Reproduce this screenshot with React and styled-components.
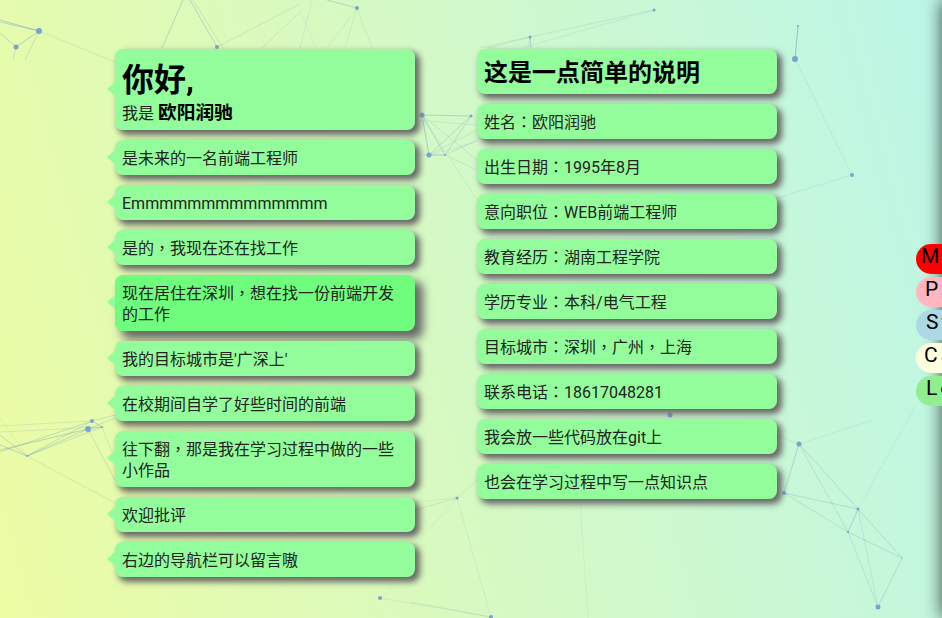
import React from 'react';
import styled, { createGlobalStyle } from 'styled-components';

const GlobalStyle = createGlobalStyle`
  html, body {
    margin: 0;
    padding: 0;
  }
  body {
    font-family: Roboto, "Noto Sans CJK SC", sans-serif;
    font-size: 16px;
    color: #222;
  }
`;

const Page = styled.div`
  position: relative;
  width: 942px;
  height: 618px;
  overflow: hidden;
  background: linear-gradient(75deg, #ecfca3 0%, #bcf6e8 100%);
`;

const Backdrop = styled.svg`
  position: absolute;
  top: 0;
  left: 0;
  filter: blur(0.5px);
`;

const Columns = styled.main`
  position: relative;
  display: flex;
  gap: 62px;
  padding: 49px 0 0 115px;
`;

const Column = styled.section`
  display: flex;
  flex-direction: column;
  gap: 10px;
  width: 300px;
`;

const Card = styled.div`
  position: relative;
  box-sizing: border-box;
  padding: 8px 7px 6px;
  border-radius: 8px;
  background: ${props => (props.$hover ? '#70fd7d' : '#93fd9b')};
  box-shadow: ${props => (props.$hover ? '7px 7px 10px 1px #666' : '4px 4px 6px 1px #666')};
  line-height: 21px;

  ${props => props.$arrow && `
    &::before {
      content: '';
      position: absolute;
      top: 50%;
      left: -8px;
      margin-top: -8px;
      border-style: solid;
      border-width: 7px 8px 7px 0;
      border-color: transparent #93fd9b transparent transparent;
    }
  `}
`;

const Hello = styled.h1`
  margin: 0;
  padding-top: 3px;
  font-size: 32px;
  line-height: 41px;
  font-weight: 700;
  color: #000;
`;

const Intro = styled.p`
  margin: 0;
  height: 23px;
  line-height: 26px;
`;

const Name = styled.strong`
  font-size: 18.72px;
  line-height: 1;
  color: #000;
`;

const Heading = styled.h2`
  margin: 0;
  padding-top: 2px;
  font-size: 24px;
  line-height: 29px;
  font-weight: 700;
  color: #000;
`;

const Punct = styled.span`
  font-family: "Noto Sans CJK TC", sans-serif;
  line-height: 1;
`;

const Drawer = styled.aside`
  position: absolute;
  top: 0;
  bottom: 0;
  left: 942px;
  width: 40px;
  box-shadow: 0 0 18px rgba(0, 0, 0, 0.7);
`;

const NavList = styled.nav`
  position: absolute;
  top: 244px;
  left: -26px;
  display: flex;
  flex-direction: column;
  gap: 3px;
  width: 66px;
`;

const NavPill = styled.a`
  height: 30px;
  padding-left: ${props => props.$inset}px;
  border-radius: 15px 0 0 15px;
  background: ${props => props.$color};
  color: #000;
  font-size: 21px;
  line-height: 25px;
  letter-spacing: 3px;
  white-space: nowrap;
  overflow: hidden;
`;

const leftItems = [
  { text: '是未来的一名前端工程师' },
  { text: 'Emmmmmmmmmmmmmm' },
  { text: '是的，我现在还在找工作' },
  { text: '现在居住在深圳，想在找一份前端开发的工作', hover: true },
  { text: "我的目标城市是'广深上'" },
  { text: '在校期间自学了好些时间的前端' },
  { text: '往下翻，那是我在学习过程中做的一些小作品' },
  { text: '欢迎批评' },
  { text: '右边的导航栏可以留言嗷' },
];

const rightItems = [
  '姓名：欧阳润驰',
  '出生日期：1995年8月',
  '意向职位：WEB前端工程师',
  '教育经历：湖南工程学院',
  '学历专业：本科/电气工程',
  '目标城市：深圳，广州，上海',
  '联系电话：18617048281',
  '我会放一些代码放在git上',
  '也会在学习过程中写一点知识点',
];

const navItems = [
  { label: 'Message', color: 'red', inset: 5 },
  { label: 'Page', color: 'lightpink', inset: 9 },
  { label: 'Study', color: 'lightblue', inset: 10 },
  { label: 'Case', color: 'lightyellow', inset: 8 },
  { label: 'Learn', color: 'lightgreen', inset: 10 },
];

// x, y, radius
const nodes = [
  [39, 31, 3], [16, 47, 2.5], [217, 47, 2], [357, 8, 2], [530, 37, 1.5], [654, 10, 1.5],
  [798, 26, 1], [795, 59, 3], [852, 175, 2], [422, 115, 2.5], [471, 116, 1.5], [429, 155, 2.5],
  [445, 155, 1], [92, 421, 2], [88, 429, 3], [102, 427, 1], [27, 456, 1], [799, 444, 2.5],
  [784, 493, 2], [858, 509, 1.5], [848, 532, 1], [902, 558, 0.6], [878, 607, 2.5], [457, 498, 1.5],
  [491, 617, 2], [380, 598, 2], [670, 415, 2.5],
];

// x1, y1, x2, y2, opacity
const lines = [
  [0, 20, 39, 31, 0.5], [0, 22, 39, 31, 0.4], [16, 47, 39, 31, 0.5], [0, 33, 16, 47, 0.4], [16, 47, 13, 60, 0.3],
  [39, 31, 115, 62, 0.2], [39, 31, 25, 60, 0.3],
  [183, 0, 162, 48, 0.4], [190, 0, 217, 47, 0.4], [193, 0, 223, 48, 0.25], [217, 47, 300, 4, 0.2],
  [262, 48, 300, 12, 0.2], [327, 0, 357, 8, 0.4], [357, 8, 327, 48, 0.15], [357, 8, 345, 48, 0.15],
  [357, 8, 372, 48, 0.15], [312, 0, 300, 48, 0.15], [300, 10, 316, 48, 0.1],
  [530, 37, 654, 10, 0.2], [654, 10, 522, 48, 0.15], [530, 37, 488, 48, 0.2], [530, 37, 479, 48, 0.15],
  [530, 37, 528, 48, 0.2], [530, 37, 531, 48, 0.4], [798, 26, 795, 59, 0.6], [795, 59, 852, 175, 0.15],
  [852, 175, 777, 198, 0.15],
  [422, 115, 471, 116, 0.4], [422, 115, 429, 155, 0.5], [422, 115, 445, 155, 0.4], [429, 155, 445, 155, 0.5],
  [471, 116, 429, 155, 0.35], [471, 116, 445, 155, 0.3], [422, 115, 477, 160, 0.2], [429, 155, 477, 130, 0.2],
  [445, 155, 477, 140, 0.25], [445, 155, 477, 170, 0.2], [429, 155, 477, 142, 0.15], [422, 115, 477, 200, 0.12],
  [415, 120, 477, 125, 0.15], [415, 155, 429, 155, 0.2],
  [0, 445, 27, 456, 0.45], [0, 435, 27, 456, 0.4], [0, 426, 92, 421, 0.2], [0, 432, 102, 427, 0.2],
  [0, 450, 88, 429, 0.45], [0, 452, 92, 421, 0.35], [27, 456, 88, 429, 0.4], [27, 456, 92, 421, 0.35],
  [27, 456, 102, 427, 0.3], [27, 456, 115, 503, 0.2], [88, 429, 115, 480, 0.3], [102, 427, 115, 460, 0.2],
  [92, 421, 115, 415, 0.3], [88, 429, 115, 418, 0.3], [92, 421, 102, 427, 0.4], [88, 429, 102, 427, 0.4],
  [0, 418, 27, 456, 0.12],
  [799, 444, 784, 493, 0.4], [799, 444, 858, 509, 0.3], [799, 444, 848, 532, 0.25], [784, 493, 858, 509, 0.3],
  [784, 493, 848, 532, 0.25], [858, 509, 848, 532, 0.45], [858, 509, 902, 558, 0.3], [858, 509, 878, 607, 0.2],
  [848, 532, 902, 558, 0.3], [848, 532, 878, 607, 0.25], [902, 558, 878, 607, 0.3], [799, 444, 777, 435, 0.15],
  [799, 444, 873, 420, 0.12], [858, 509, 916, 405, 0.12],
  [457, 498, 415, 510, 0.2], [457, 498, 415, 545, 0.12], [457, 498, 415, 502, 0.12], [457, 498, 491, 617, 0.15],
  [457, 498, 477, 480, 0.15], [491, 617, 410, 602, 0.2], [380, 598, 491, 617, 0.15], [580, 500, 588, 618, 0.1],
  [380, 598, 415, 570, 0.1],
];

// the reference's full-width ：and ， sit centred in their cell, as in the TC font
function Line({ text }) {
  return text.split(/([：，])/).map((part, index) =>
    index % 2 ? <Punct key={index}>{part}</Punct> : part
  );
}

export default function App() {
  return (
    <Page>
      <GlobalStyle />
      <Backdrop width="942" height="618" viewBox="0 0 942 618">
        {lines.map(([x1, y1, x2, y2, opacity], index) => (
          <line key={index} x1={x1} y1={y1} x2={x2} y2={y2} stroke="#5f8fc0" strokeWidth="1" opacity={opacity * 0.8} />
        ))}
        {nodes.map(([cx, cy, r], index) => (
          <circle key={index} cx={cx} cy={cy} r={r} fill="#7aa3cc" />
        ))}
      </Backdrop>
      <Columns>
        <Column>
          <Card $arrow>
            <Hello>你好,</Hello>
            <Intro>我是 <Name>欧阳润驰</Name></Intro>
          </Card>
          {leftItems.map(item => (
            <Card key={item.text} $arrow $hover={item.hover}><Line text={item.text} /></Card>
          ))}
        </Column>
        <Column>
          <Card><Heading>这是一点简单的说明</Heading></Card>
          {rightItems.map(text => (
            <Card key={text}><Line text={text} /></Card>
          ))}
        </Column>
      </Columns>
      <Drawer>
        <NavList>
          {navItems.map(item => (
            <NavPill key={item.label} $color={item.color} $inset={item.inset}>{item.label}</NavPill>
          ))}
        </NavList>
      </Drawer>
    </Page>
  );
}
